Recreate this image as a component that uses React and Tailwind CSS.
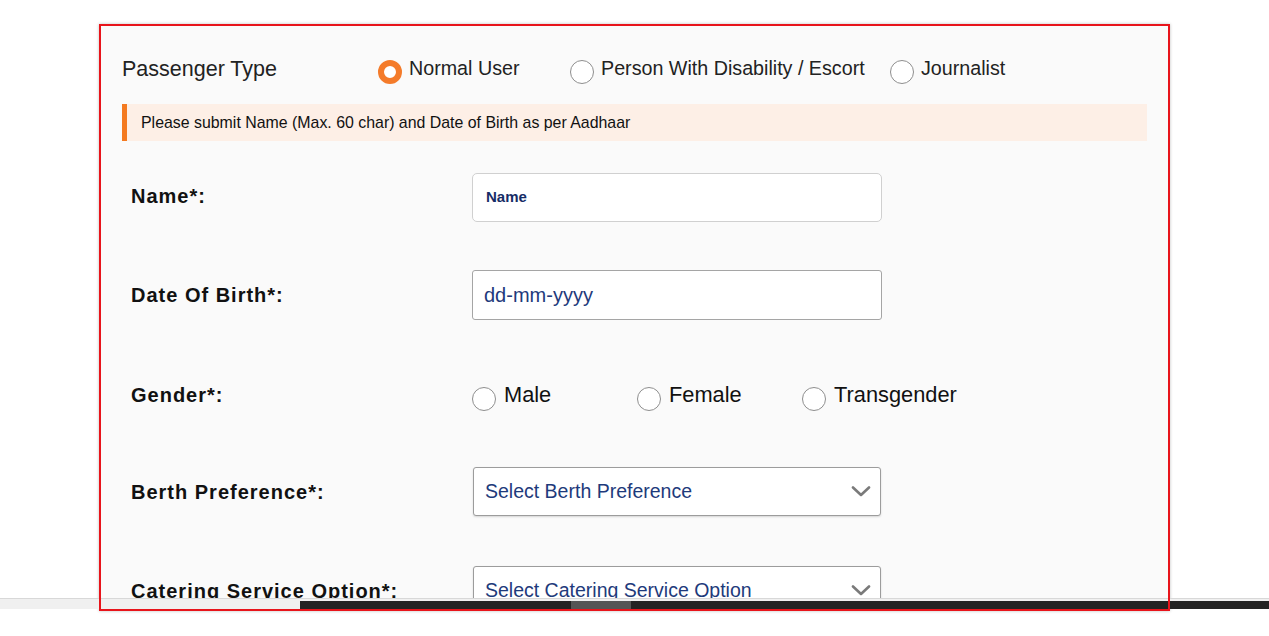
import React from "react";

const font = { fontFamily: '"Liberation Sans", Arial, sans-serif' };

function Radio({ checked }) {
  return checked ? (
    <span className="w-[24px] h-[24px] rounded-full border-[6px] border-[#f47b2a] bg-white shrink-0" />
  ) : (
    <span className="w-[24px] h-[24px] rounded-full border border-[#8e8e8e] bg-white shrink-0" />
  );
}

function Chevron() {
  return (
    <svg width="20" height="11" viewBox="0 0 20 11" fill="none">
      <polyline points="2,1.5 10,9 18,1.5" stroke="#7a7a7a" strokeWidth="2.6" strokeLinecap="round" strokeLinejoin="round" />
    </svg>
  );
}

function Label({ children, className = "" }) {
  return (
    <div className={`w-[341px] shrink-0 text-[20px] font-bold tracking-[1px] text-[#111] ${className}`}>{children}</div>
  );
}

function Select({ text }) {
  return (
    <div className="ml-[1px] w-[408px] h-full flex items-center justify-between pl-[11px] pr-[9px] bg-white border border-[#9c9c9c] rounded-[3px] shadow-[0_1px_2px_rgba(0,0,0,0.15)]">
      <span className="text-[19.5px] text-[#1e3a7b]">{text}</span>
      <Chevron />
    </div>
  );
}

export default function App() {
  const passengerTypes = [
    { label: "Normal User", w: "w-[192px]", checked: true },
    { label: "Person With Disability / Escort", w: "w-[320px]" },
    { label: "Journalist", w: "w-[200px]" },
  ];
  const genders = ["Male", "Female", "Transgender"];

  return (
    <div className="relative w-[1269px] h-[636px] bg-white overflow-hidden" style={font}>
      {/* form panel */}
      <div className="ml-[99px] mt-[24px] w-[1071px] h-[587px] border-2 border-[#e8141b] bg-[#fafafa] overflow-hidden shadow-[0_0_3px_rgba(0,0,0,0.25)]">
        {/* Passenger type */}
        <div className="pt-[25px] pl-[21px] h-[61px] flex items-center">
          <div className="w-[256px] text-[21.5px] text-[#222]">Passenger Type</div>
          {passengerTypes.map(p => (
            <div key={p.label} className={`${p.w} flex items-center gap-[7px]`}>
              <span className="mt-[6px] flex"><Radio checked={p.checked} /></span>
              <span className="text-[19.7px] text-[#222] whitespace-nowrap">{p.label}</span>
            </div>
          ))}
        </div>

        {/* Notice */}
        <div className="mt-[17px] ml-[21px] w-[1025px] h-[37px] flex items-center border-l-[5px] border-[#f47a20] bg-[#fdefe6] pl-[14px]">
          <span className="text-[15.9px] text-[#111]">Please submit Name (Max. 60 char) and Date of Birth as per Aadhaar</span>
        </div>

        <div className="pl-[30px]">
          {/* Name */}
          <div className="mt-[32px] h-[49px] flex items-center">
            <Label className="pb-[3px]">Name*:</Label>
            <div className="w-[410px] h-full flex items-center pl-[13px] bg-white border border-[#d0d0d0] rounded-[5px]">
              <span className="text-[15px] font-bold text-[#162c66]">Name</span>
            </div>
          </div>

          {/* DOB */}
          <div className="mt-[48px] h-[50px] flex items-center">
            <Label>Date Of Birth*:</Label>
            <div className="w-[410px] h-full flex items-center pl-[11px] bg-white border border-[#a5a5a5] rounded-[3px]">
              <span className="text-[20px] text-[#1e3a7b]">dd-mm-yyyy</span>
            </div>
          </div>

          {/* Gender */}
          <div className="mt-[50px] h-[50px] flex items-center">
            <Label className="pb-[1px]">Gender*:</Label>
            {genders.map(g => (
              <div key={g} className="w-[165px] flex items-center gap-[8px]">
                <span className="mt-[8px] flex"><Radio /></span>
                <span className="text-[21.8px] text-[#111]">{g}</span>
              </div>
            ))}
          </div>

          {/* Berth */}
          <div className="mt-[47px] h-[49px] flex items-center">
            <Label>Berth Preference*:</Label>
            <Select text="Select Berth Preference" />
          </div>

          {/* Catering */}
          <div className="mt-[50px] h-[49px] flex items-center">
            <Label>Catering Service Option*:</Label>
            <Select text="Select Catering Service Option" />
          </div>
        </div>
      </div>

      {/* horizontal scrollbar strip */}
      <div className="absolute left-0 top-[598px] w-full h-[11px] z-10 flex flex-col">
        <div className="h-[1px] bg-[#d8d8d8]" />
        <div className="flex-1 flex">
          <div className="w-[300px] bg-[#f0f0f0]" />
          <div className="flex-1 flex flex-col bg-[#f0f0f0]">
            <div className="h-[2px]" />
            <div className="flex-1 bg-[#232323] flex">
              <div className="ml-[271px] w-[60px] bg-[#555]" />
            </div>
          </div>
        </div>
      </div>

      {/* red highlight frame over everything */}
      <div className="absolute left-[99px] top-[24px] w-[1071px] h-[587px] border-2 border-[#e8141b] z-20 pointer-events-none" />
    </div>
  );
}
